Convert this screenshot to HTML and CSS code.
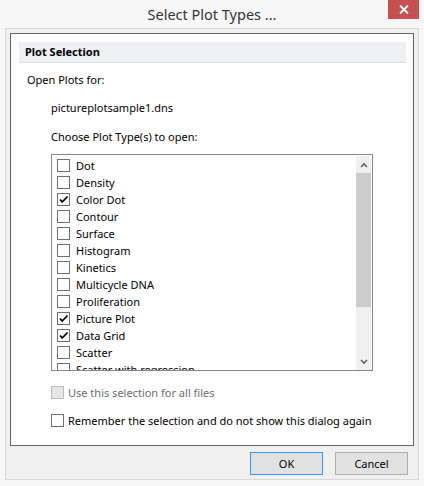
FILE: index.html
```html
<!DOCTYPE html>
<html>
<head>
<meta charset="utf-8">
<link rel="stylesheet" href="styles.css">
</head>
<body>
<div class="window">
  <div class="titlebar">
    <div class="spacer"></div>
    <div class="title">Select Plot Types ...</div>
    <div class="close">
      <svg width="10" height="9" viewBox="0 0 10 9"><path d="M1 0.5 L9 8.5 M9 0.5 L1 8.5" stroke="#fff" stroke-width="1.8" fill="none"/></svg>
    </div>
  </div>
  <div class="client">
    <div class="panel">
      <div class="header">Plot Selection</div>
      <div class="line l-open">Open Plots for:</div>
      <div class="line l-file">pictureplotsample1.dns</div>
      <div class="line l-choose">Choose Plot Type(s) to open:</div>
      <div class="listbox">
        <div class="items">
          <div class="item"><span class="cb"></span>Dot</div>
          <div class="item"><span class="cb"></span>Density</div>
          <div class="item"><span class="cb on"><svg width="11" height="11" viewBox="0 0 11 11"><polyline points="2,5.5 4.2,8 9.5,2.5" fill="none" stroke="#000" stroke-width="1.8"/></svg></span>Color Dot</div>
          <div class="item"><span class="cb"></span>Contour</div>
          <div class="item"><span class="cb"></span>Surface</div>
          <div class="item"><span class="cb"></span>Histogram</div>
          <div class="item"><span class="cb"></span>Kinetics</div>
          <div class="item"><span class="cb"></span>Multicycle DNA</div>
          <div class="item"><span class="cb"></span>Proliferation</div>
          <div class="item"><span class="cb on"><svg width="11" height="11" viewBox="0 0 11 11"><polyline points="2,5.5 4.2,8 9.5,2.5" fill="none" stroke="#000" stroke-width="1.8"/></svg></span>Picture Plot</div>
          <div class="item"><span class="cb on"><svg width="11" height="11" viewBox="0 0 11 11"><polyline points="2,5.5 4.2,8 9.5,2.5" fill="none" stroke="#000" stroke-width="1.8"/></svg></span>Data Grid</div>
          <div class="item"><span class="cb"></span>Scatter</div>
          <div class="item"><span class="cb"></span>Scatter with regression</div>
        </div>
        <div class="scrollbar">
          <div class="arrow"><svg width="8" height="6" viewBox="0 0 8 6"><path d="M1 5 L4 2 L7 5" fill="none" stroke="#606060" stroke-width="1.6"/></svg></div>
          <div class="track">
            <div class="thumb"></div>
          </div>
          <div class="arrow"><svg width="8" height="6" viewBox="0 0 8 6"><path d="M1 1 L4 4 L7 1" fill="none" stroke="#606060" stroke-width="1.6"/></svg></div>
        </div>
      </div>
      <div class="opt disabled"><span class="cb"></span>Use this selection for all files</div>
      <div class="opt opt-remember"><span class="cb"></span>Remember the selection and do not show this dialog again</div>
    </div>
    <div class="buttons">
      <div class="btn default">OK</div>
      <div class="btn">Cancel</div>
    </div>
  </div>
</div>
</body>
</html>
```

FILE: styles.css
```css
html, body {
  margin: 0;
  padding: 0;
}
body {
  background: #f7f7f7;
  font-family: "Noto Sans", "Open Sans", sans-serif;
  font-size: 11px;
  color: #000;
}
.window {
  width: 424px;
  height: 486px;
  background: #f7f7f7;
  box-sizing: border-box;
}
.titlebar {
  height: 28px;
  display: grid;
  grid-template-columns: 1fr auto 1fr;
  align-items: start;
}
.title {
  font-size: 14.5px;
  color: #333;
  line-height: 19px;
  padding-top: 5px;
}
.close {
  justify-self: end;
  margin-right: 5px;
  width: 31px;
  height: 19px;
  background: #c75050;
  display: flex;
  align-items: center;
  justify-content: center;
}
.client {
  margin: 0 5px;
  height: 452px;
  box-sizing: border-box;
  border: 1px solid #d9d9d9;
  background: #f0f0f0;
  padding: 4px 4px 0 4px;
}
.panel {
  height: 413px;
  box-sizing: border-box;
  border: 1px solid #646464;
  background: #fff;
  padding-top: 8px;
}
.header {
  margin: 0 7px 0 8px;
  height: 20px;
  background: #eff0f4;
  border-bottom: 1px solid #dde0e6;
  font-weight: bold;
  line-height: 20px;
  padding-left: 6px;
}
.line {
  height: 16px;
  line-height: 16px;
  margin-left: 40px;
}
.l-open {
  margin-left: 16px;
  margin-top: 9px;
}
.l-file {
  margin-top: 12px;
}
.l-choose {
  margin-top: 13px;
}
.listbox {
  margin: 9px 0 0 40px;
  width: 322px;
  height: 217px;
  box-sizing: border-box;
  border: 1px solid #828790;
  display: flex;
  padding: 1px 1px 0 0;
  overflow: hidden;
}
.items {
  flex: 1;
  padding-top: 1px;
  padding-left: 5px;
  overflow: hidden;
}
.item {
  height: 17px;
  display: flex;
  align-items: center;
  white-space: nowrap;
}
.cb {
  width: 13px;
  height: 13px;
  box-sizing: border-box;
  border: 1px solid #707070;
  background: #fff;
  margin-right: 6px;
  flex: none;
  display: flex;
  align-items: center;
  justify-content: center;
}
.scrollbar {
  width: 15px;
  background: #f0f0f0;
  display: flex;
  flex-direction: column;
}
.arrow {
  height: 17px;
  display: flex;
  align-items: center;
  justify-content: center;
}
.track {
  flex: 1;
}
.thumb {
  height: 134px;
  background: #cdcdcd;
}
.opt {
  margin-left: 40px;
  height: 16px;
  display: flex;
  align-items: center;
  margin-top: 13px;
  white-space: nowrap;
}
.opt .cb {
  margin-right: 4px;
}
.opt-remember {
  margin-top: 12px;
}
.disabled {
  color: #6d6d6d;
}
.disabled .cb {
  background: #e6e6e6;
  border-color: #bcbcbc;
}
.buttons {
  display: flex;
  justify-content: flex-end;
  gap: 12px;
  padding: 6px 6px 0 0;
}
.btn {
  width: 73px;
  height: 23px;
  box-sizing: border-box;
  border: 1px solid #adadad;
  background: #e1e1e1;
  display: flex;
  align-items: center;
  justify-content: center;
}
.btn.default {
  border-color: #3399ff;
}
```
